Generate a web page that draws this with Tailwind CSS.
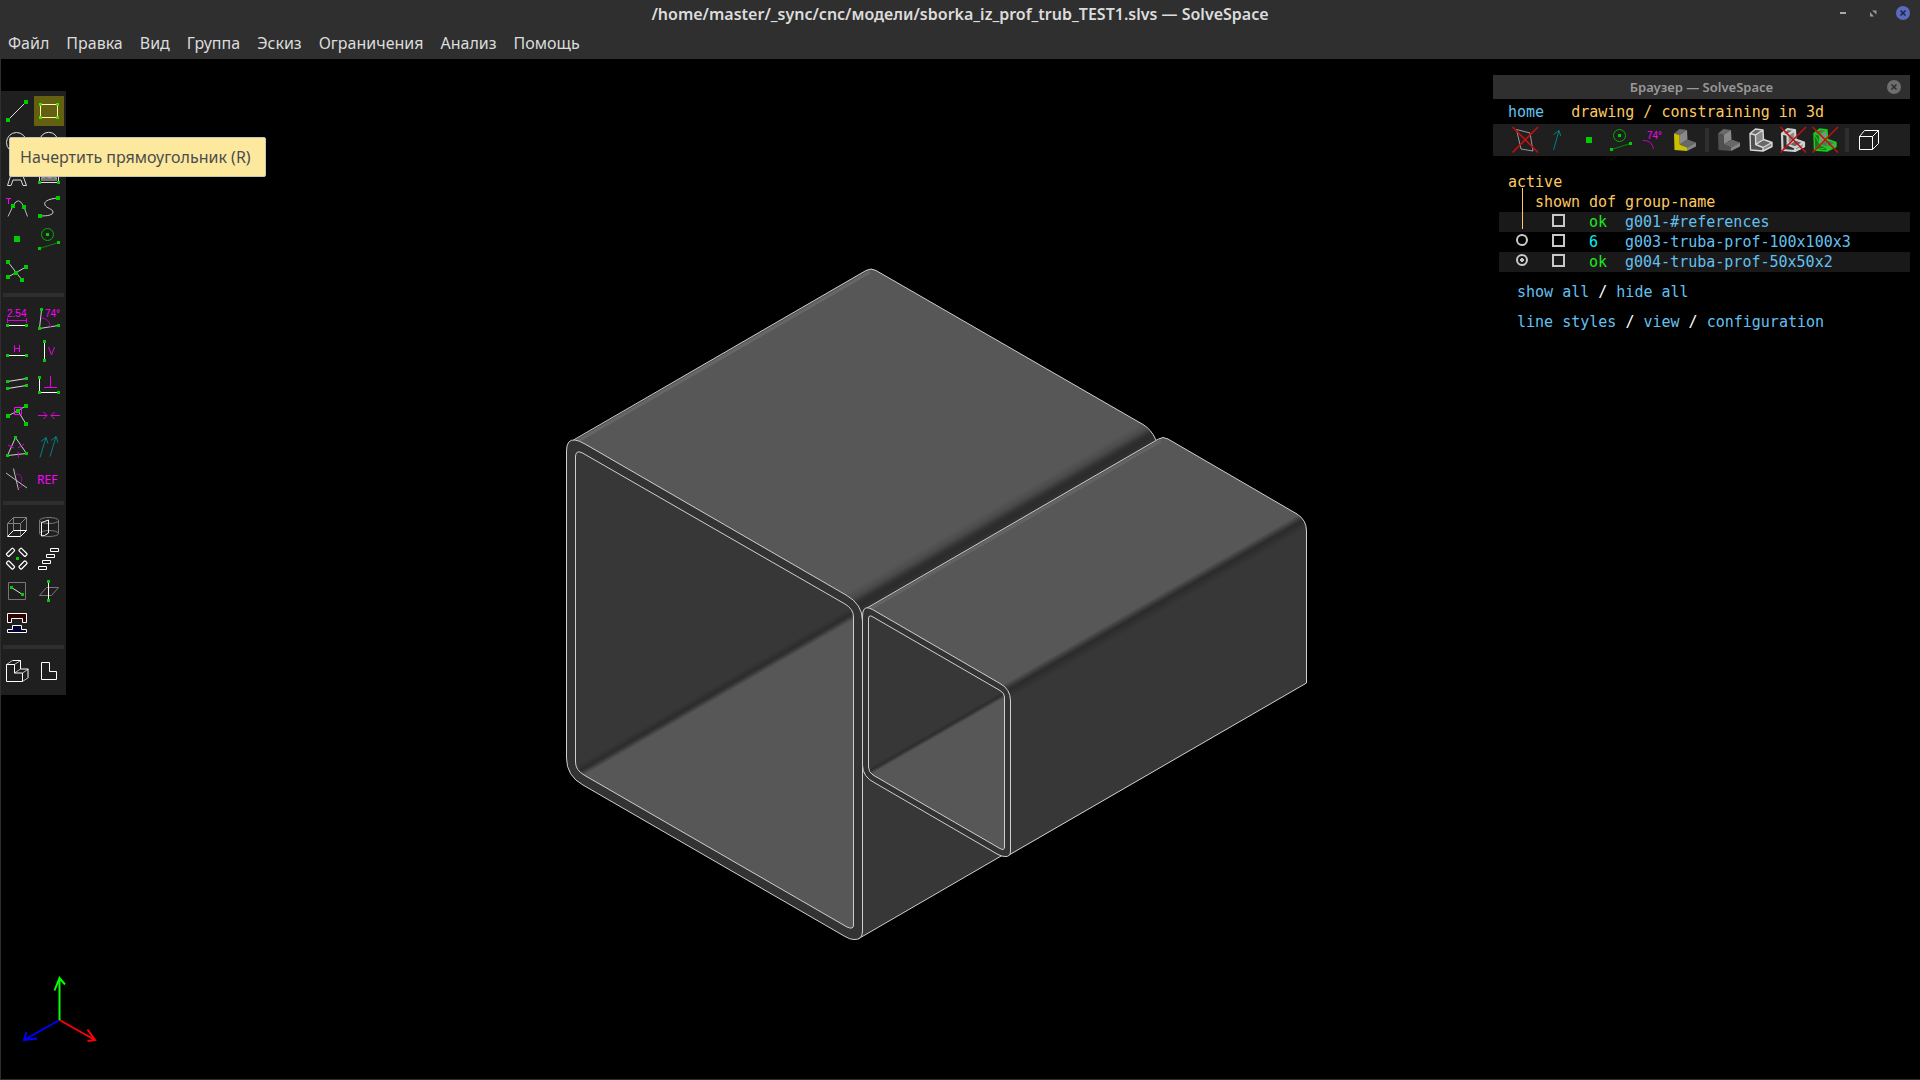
<!DOCTYPE html>
<html lang="ru">
<head>
<meta charset="utf-8">
<meta name="viewport" content="width=device-width, initial-scale=1">
<title>SolveSpace</title>
<script src="https://cdn.jsdelivr.net/npm/@tailwindcss/browser@4"></script>
</head>
<body class="bg-[#2f2f2f] font-['Noto_Sans',sans-serif] text-[#dcdcdc]">

<!-- Shared shapes -->
<svg class="absolute size-0" aria-hidden="true">
  <defs>
    <symbol id="pt" viewBox="0 0 32 32">
      <circle cx="14.5" cy="11.5" r="6" fill="none" stroke="#00b000"/>
      <path d="M6.5 25.5L25.5 19.5" stroke="#008c00"/>
      <path d="M13 10h3v3h-3zM5 24h3v3h-3zM24 18h3v3h-3z" fill="#00cc00"/>
    </symbol>
    <symbol id="arrow" viewBox="0 0 32 32">
      <path d="M12.5 26L18 6.5M12.5 10.5L18 6.5L19.7 12" fill="none" stroke="#008080"/>
    </symbol>
    <symbol id="lsolid" viewBox="0 0 32 32">
      <path d="M5 9.5L10.5 5L18 6L10.5 11z" fill="#6a6a6a"/>
      <path d="M10.5 11L18 6L18.5 15.5L10.7 20.5z" fill="#8a8a8a"/>
      <path d="M10.7 20.5L18.5 15.5L27 18.5L18 23.5z" fill="#686868"/>
      <path d="M18 23.5L27 18.5V22.5L18 27z" fill="#858585"/>
    </symbol>
    <symbol id="lfront" viewBox="0 0 32 32">
      <path d="M5 9.5L10.5 11L10.7 20.5L18 23.5V27L5.5 26z"/>
    </symbol>
    <symbol id="ledges" viewBox="0 0 32 32">
      <path d="M5 9.5L10.5 5L18 6L10.5 11zM10.5 11L10.7 20.5L18 23.5V27L5.5 26L5 9.5M18 6L18.5 15.5L10.7 20.5M18.5 15.5L27 18.5L18 23.5M27 18.5V22.5L18 27" fill="none" stroke-linejoin="round"/>
    </symbol>
    <symbol id="off" viewBox="0 0 32 32">
      <path d="M3.5 3L29 28.5M29 3L3.5 28.5" stroke="#c01010" stroke-width="1.6"/>
    </symbol>
  </defs>
</svg>

<div class="flex min-h-screen flex-col">
  <header>
    <div class="relative flex h-7 items-center justify-center">
      <h1 class="text-base font-semibold">/home/master/_sync/cnc/модели/sborka_iz_prof_trub_TEST1.slvs — SolveSpace</h1>
      <div class="absolute right-[9px] top-[5px] flex gap-[14px]">
        <button aria-label="Свернуть"><svg class="block size-4" viewBox="0 0 16 16"><path d="M5 7h6v2H5z" fill="#a8a8a8"/></svg></button>
        <button aria-label="Восстановить"><svg class="block size-4" viewBox="0 0 16 16"><path d="M7 5.5h4.5v4zM5 7v4.5h4z" fill="#999"/></svg></button>
        <button aria-label="Закрыть"><svg class="block size-4" viewBox="0 0 16 16"><circle cx="8" cy="8" r="7" fill="#5a6bbd"/><path d="M5.5 5.5l5 5M10.5 5.5l-5 5" stroke="#20263f" stroke-width="1.6"/></svg></button>
      </div>
    </div>
    <nav class="flex h-[31px] items-center gap-[17px] pb-px pl-2 text-base leading-5">
      <button>Файл</button><button>Правка</button><button>Вид</button><button>Группа</button><button>Эскиз</button><button>Ограничения</button><button>Анализ</button><button>Помощь</button>
    </nav>
  </header>

  <main class="relative mb-px ml-px flex-1 bg-black">
    <!-- Model view: two square tubes in isometric projection -->
    <svg class="absolute inset-0 size-full" viewBox="1 59 1919 1020" preserveAspectRatio="xMidYMid meet" role="img" aria-label="Две профильные трубы">
      <defs>
        <linearGradient id="gTopA" gradientUnits="userSpaceOnUse" x1="845" y1="594" x2="857" y2="614.8">
          <stop offset="0" stop-color="#575757"/><stop offset=".3" stop-color="#4a4a4a"/><stop offset=".55" stop-color="#303030"/><stop offset=".7" stop-color="#2b2b2b"/><stop offset="1" stop-color="#343434"/>
        </linearGradient>
        <linearGradient id="gTopB" gradientUnits="userSpaceOnUse" x1="1004" y1="684" x2="1012" y2="697.9">
          <stop offset="0" stop-color="#575757"/><stop offset=".3" stop-color="#383838"/><stop offset=".45" stop-color="#2b2b2b"/><stop offset="1" stop-color="#373737"/>
        </linearGradient>
        <linearGradient id="gInA" gradientUnits="userSpaceOnUse" x1="713" y1="687" x2="719" y2="697.4">
          <stop offset="0" stop-color="#373737"/><stop offset=".5" stop-color="#2c2c2c"/><stop offset=".65" stop-color="#353535"/><stop offset="1" stop-color="#575757"/>
        </linearGradient>
        <linearGradient id="gInB" gradientUnits="userSpaceOnUse" x1="936" y1="729" x2="939.5" y2="735.1">
          <stop offset="0" stop-color="#373737"/><stop offset=".5" stop-color="#2d2d2d"/><stop offset="1" stop-color="#575757"/>
        </linearGradient>
      </defs>
      <path d="M573.5 440.5L866 270.5Q871 267.5 876 270.5L1143 424.5Q1151 429 1156 440L863 615L848 596Z" fill="url(#gTopA)"/>
      <path d="M577 441.5L870 272" stroke="#666" stroke-width="3"/>
      <path d="M862.5 760L1002 855.5L858 939L862.5 932Z" fill="#373737"/>
      <path d="M868 608L1158.5 439Q1163 436 1168 439L1297 514Q1306.5 520 1306.5 531V683L1010 855Z" fill="url(#gTopB)"/>
      <path d="M871 608.5L1161 441" stroke="#636363" stroke-width="3"/>
      <g fill="none" stroke="#cfcfcf">
        <path d="M573.5 440L866 270.5Q871 267.5 876 270.5L1143 424.5Q1151 429 1156 440"/>
        <path d="M867 608L1158.5 439Q1163 436 1168 439L1297 514Q1306.5 520 1306.5 531V683L1009 855"/>
        <path d="M858 939L1002 855.5"/>
      </g>
      <g stroke="#cfcfcf">
        <path d="M566.5 451Q566.5 439 575 440Q579 440.5 585 444L846 595Q862.5 604 862.5 621V931Q862.5 940 854 939.5Q850 939.5 845 936.5L583 785Q566.5 776 566.5 758Z" fill="#333"/>
        <path d="M575.5 457Q575.5 451 580 452Q583 453 586 455L845 604Q853.5 609 853.5 617V925Q853.5 930 847 927L584 775Q575.5 770 575.5 762Z" fill="url(#gInA)"/>
        <path d="M862.5 617Q862.5 606 869 608Q872 609 876 611.5L1000 683.5Q1010.5 689 1010.5 701V851Q1010.5 857 1005 856.5Q1002 856.5 998 854.5L875 783Q862.5 777 862.5 765Z" fill="#333"/>
        <path d="M868.5 619Q868.5 614 873 617L1000 690.5Q1004.5 693 1004.5 697V847Q1004.5 851 1000 848.5L873 775Q868.5 772 868.5 767Z" fill="url(#gInB)"/>
      </g>
    </svg>

    <!-- Axes -->
    <svg class="absolute bottom-8 left-[19px] size-20" viewBox="20 967 80 80" fill="none" stroke-width="2">
      <path d="M59.5 1020L24 1040M26.5 1032L24 1040L37 1038.5" stroke="#0000ff"/>
      <path d="M59.5 1020L95 1040M87.5 1029.5L95 1040L87.5 1041" stroke="#ff0000"/>
      <path d="M59.5 1020V978M54.5 990.5L59.5 978L65 984.5" stroke="#00ff00"/>
    </svg>

    <!-- Drawing toolbar -->
    <aside class="absolute left-0 top-8 w-[65px] bg-[#1f1f1f] pb-2 pt-1">
      <div class="grid w-16 grid-cols-2">
        <button aria-label="Отрезок"><svg class="block size-8" viewBox="0 0 32 32"><path d="M7 25L25 7" stroke="#ddd"/><path d="M5 23h4v4H5zM23 5h4v4h-4z" fill="#0c0"/></svg></button>
        <button aria-label="Начертить прямоугольник" aria-describedby="tip"><svg class="block size-8" viewBox="0 0 32 32"><path d="M1 1h30v30H1z" fill="#636012"/><path d="M7.5 9.5h17v13h-17z" fill="none" stroke="#fffbb4"/><path d="M6 8h3v3H6zM23 8h3v3h-3zM6 21h3v3H6zM23 21h3v3h-3z" fill="#4cdc00"/></svg></button>
        <button aria-label="Окружность"><svg class="block size-8" viewBox="0 0 32 32"><circle cx="15.5" cy="15.5" r="10" fill="none" stroke="#ddd"/></svg></button>
        <button aria-label="Дуга"><svg class="block size-8" viewBox="0 0 32 32"><path d="M6.5 14.5a9.2 9.2 0 0 1 18.4 0" fill="none" stroke="#ddd"/></svg></button>
        <button aria-label="Текст"><svg class="block size-8" viewBox="0 0 32 32"><path d="M6.5 26.5L13 6h5l7.5 20.5h-3.5l-2-5.5h-8l-2 5.5zM12.5 17.5h6" fill="none" stroke="#ddd"/></svg></button>
        <button aria-label="Изображение"><svg class="block size-8" viewBox="0 0 32 32"><path d="M6.5 7.5h19v16h-19z" fill="#1f1f1f" stroke="#ddd"/><path d="M8 9h16v13H8z" fill="#777"/><path d="M8 20l5-3 4 2 3-2 4 3" stroke="#aaa" fill="none"/><path d="M5 22h3v3H5zM24 22h3v3h-3z" fill="#0c0"/></svg></button>
        <button aria-label="Касательная дуга"><svg class="block size-8" viewBox="0 0 32 32"><path d="M7 25.5L12 15Q17.5 4 23 16L26.5 25.5" fill="none" stroke="#bbb"/><path d="M5 7.5h5M7.5 7.5V13" stroke="#f0f"/><path d="M10 13h4v4h-4zM21 14h4v4h-4z" fill="#0c0"/></svg></button>
        <button aria-label="Сплайн"><svg class="block size-8" viewBox="0 0 32 32"><path d="M25 7C14 8 10.5 11 12 14C13 17 20 18 20 21C20 24 15 25 7 25" fill="none" stroke="#ccc"/><path d="M23 5h4v4h-4zM5 23h4v4H5z" fill="#0c0"/></svg></button>
        <button aria-label="Точка"><svg class="block size-8" viewBox="0 0 32 32"><path d="M13 13h6v6h-6z" fill="#0c0"/></svg></button>
        <button aria-label="Вспомогательная геометрия"><svg class="block size-8"><use href="#pt"/></svg></button>
        <button aria-label="Разделить кривые"><svg class="block size-8" viewBox="0 0 32 32"><path d="M7 7L21 25M7 22L25 12" stroke="#ccc"/><path d="M5 5h4v4H5zM23 10h4v4h-4zM5 20h4v4H5zM13 16h4v4h-4zM19 23h4v4h-4z" fill="#0c0"/></svg></button>
      </div>
      <div class="mx-[2px] my-[6px] h-1 bg-[#2e2e2e]"></div>
      <div class="grid w-16 grid-cols-2">
        <button aria-label="Расстояние"><svg class="block size-8" viewBox="0 0 32 32"><text x="6" y="14" class="font-['Liberation_Sans',sans-serif] text-[10px] font-normal" fill="#f0f">2.54</text><path d="M6.5 15v5M25.5 15v5M7 17.5h18" stroke="#d000d0"/><path d="M7 22.5h18" stroke="#fff"/><path d="M5 21h3v3H5zM24 21h3v3h-3z" fill="#0c0"/></svg></button>
        <button aria-label="Угол"><svg class="block size-8" viewBox="0 0 32 32"><path d="M8.5 7L6.5 25.5L25.5 22.5" fill="none" stroke="#ccc"/><path d="M8 15Q16 15 17.5 24" fill="none" stroke="#b000b0"/><text x="12" y="14" class="font-['Liberation_Sans',sans-serif] text-[10px]" fill="#f0f">74°</text><path d="M7 5h3v3H7zM5 24h3v3H5zM24 21h3v3h-3z" fill="#0c0"/></svg></button>
        <button aria-label="Горизонтально"><svg class="block size-8" viewBox="0 0 32 32"><path d="M13.5 10v7M18.5 10v7M13 13.5h6" stroke="#e800e8"/><path d="M7 20.5h18" stroke="#fff"/><path d="M5 19h3v3H5zM24 19h3v3h-3z" fill="#0c0"/></svg></button>
        <button aria-label="Вертикально"><svg class="block size-8" viewBox="0 0 32 32"><path d="M11.5 7v18" stroke="#fff"/><path d="M15.5 12l3 8 3-8" fill="none" stroke="#e800e8"/><path d="M10 5h3v3h-3zM10 24h3v3h-3z" fill="#0c0"/></svg></button>
        <button aria-label="Параллельно"><svg class="block size-8" viewBox="0 0 32 32"><path d="M6.5 14.5l19-3M6.5 21.5l19-3" stroke="#ddd"/><path d="M5 13h3v3H5zM24 10h3v3h-3zM5 20h3v3H5zM24 17h3v3h-3z" fill="#0c0"/></svg></button>
        <button aria-label="Перпендикулярно"><svg class="block size-8" viewBox="0 0 32 32"><path d="M6.5 11v14.500h19" fill="none" stroke="#fff"/><path d="M17.5 9v11M11 20.5h13" stroke="#e800e8"/><path d="M5 9h3v3H5zM5 24h3v3H5zM24 24h3v3h-3z" fill="#0c0"/></svg></button>
        <button aria-label="Точка на линии"><svg class="block size-8" viewBox="0 0 32 32"><path d="M7 17L25 7M17 12L25 25" stroke="#ccc"/><path d="M5 15h4v4H5zM23 5h4v4h-4zM15 10h4v4h-4zM23 23h4v4h-4z" fill="#0c0"/><path d="M13.5 8.5h7v7h-7z" fill="none" stroke="#f0f"/></svg></button>
        <button aria-label="Симметрично"><svg class="block size-8" viewBox="0 0 32 32"><path d="M5 16.5h9M10.5 13l3.5 3.5-3.5 3.5M27 16.5h-9M21.5 13L18 16.5l3.5 3.5" fill="none" stroke="#e800e8"/></svg></button>
        <button aria-label="Равенство"><svg class="block size-8" viewBox="0 0 32 32"><path d="M14.5 6.5L6.5 24.5L25.5 22.5z" fill="none" stroke="#ccc"/><path d="M7 14l6 3M17 17l6-4M17 20.5l.5 6" stroke="#d000d0"/><path d="M13 5h3v3h-3zM5 23h3v3H5zM24 21h3v3h-3z" fill="#0c0"/></svg></button>
        <button aria-label="Одинаковая ориентация"><svg class="block size-8" viewBox="0 0 32 32"><path d="M7 26.5L13 6.5M8 10.5l5-4 2 6M17 25.5L23 5.5M18 9.5l5-4 2 6" fill="none" stroke="#008080"/></svg></button>
        <button aria-label="Другой угол"><svg class="block size-8" viewBox="0 0 32 32"><path d="M5 10l21 15M12.5 5.5l5 21.500" stroke="#bbb"/><path d="M14 11.5Q20 10 21 16Q21 19 19 20M21 22q-1 3-4 3" fill="none" stroke="#a000a0"/></svg></button>
        <button aria-label="Справочный размер"><svg class="block size-8" viewBox="0 0 32 32"><text x="4" y="21" class="font-['Noto_Sans',sans-serif] text-[12px] font-normal" fill="#f0f">REF</text></svg></button>
      </div>
      <div class="mx-[2px] my-[6px] h-1 bg-[#2e2e2e]"></div>
      <div class="grid w-16 grid-cols-2">
        <button aria-label="Выдавливание"><svg class="block size-8" viewBox="0 0 32 32" fill="none"><path d="M6.5 25V12.500h13V25M6.5 12.500l6-6h13v13M19.5 12.500l6-6M12.5 6.5v13" stroke="#808080"/><path d="M6.5 25.5h13l6-6h-13z" stroke="#fff"/></svg></button>
        <button aria-label="Вращение"><svg class="block size-8" viewBox="0 0 32 32" fill="none" stroke="#777"><ellipse cx="16" cy="9.5" rx="9.5" ry="3"/><ellipse cx="16" cy="22.5" rx="9.5" ry="3"/><path d="M6.5 9.5v13M25.5 9.5v13"/><path d="M8.5 11.5l3-1 4-1.500v13l-4 2.500-3 .5z" stroke="#fff"/></svg></button>
        <button aria-label="Поворот и повтор"><svg class="block size-8" viewBox="0 0 32 32" fill="none" stroke="#fff" stroke-width="1.2"><rect x="5" y="7.5" width="9" height="3.6" rx="1" transform="rotate(-45 9.5 9.3)"/><rect x="17.5" y="7.5" width="9" height="3.6" rx="1" transform="rotate(45 22 9.3)"/><rect x="5" y="20.2" width="9" height="3.6" rx="1" transform="rotate(45 9.5 22)"/><rect x="17.5" y="20.2" width="9" height="3.6" rx="1" transform="rotate(-45 22 22)"/><path d="M15 14h3v3h-3z" fill="#0c0" stroke="none"/></svg></button>
        <button aria-label="Сдвиг и повтор"><svg class="block size-8" viewBox="0 0 32 32" fill="none" stroke="#fff"><path d="M17.5 5.5h8v3h-8zM13.5 11.5h8v3h-8zM9.5 17.5h8v3h-8zM5.5 23.5h8v3h-8z"/></svg></button>
        <button aria-label="Эскиз в плоскости"><svg class="block size-8" viewBox="0 0 32 32"><path d="M7.5 7.5h17v17h-17z" fill="none" stroke="#777"/><path d="M10.5 12.5l11 7" stroke="#ddd"/><path d="M9 11h3v3H9zM20 18h3v3h-3z" fill="#0c0"/></svg></button>
        <button aria-label="Эскиз в 3d"><svg class="block size-8" viewBox="0 0 32 32"><path d="M13.5 12.5h12l-7 8h-12z" fill="none" stroke="#777"/><path d="M15.5 7v18" stroke="#fff"/><path d="M14 5h3v3h-3zM14 24h3v3h-3z" fill="#0c0"/></svg></button>
        <button aria-label="Импорт"><svg class="block size-8" viewBox="0 0 32 32" stroke="#fff"><path d="M6.5 6.5h19v9h-4v-4h-11v4h-4z" fill="#300"/><path d="M11.5 18.5h9v4h5v3h-19v-3h5z" fill="#003"/></svg></button>
      </div>
      <div class="mx-[2px] my-[6px] h-1 bg-[#2e2e2e]"></div>
      <div class="grid w-16 grid-cols-2">
        <button aria-label="Изометрия"><svg class="block size-8" viewBox="0 0 32 32" fill="none"><path d="M5.5 9.5l6-4M13.5 9.5l6-4M13.5 18l6-4M21.5 18l6-4M21.5 26.5l6-4" stroke="#bbb"/><path d="M11.5 5.5h8V14h7.500v8.500M5.5 9.5h8V18h8v8.500h-16z" stroke="#fff"/></svg></button>
        <button aria-label="Вид по плоскости"><svg class="block size-8" viewBox="0 0 32 32" fill="none" stroke="#fff"><path d="M8.5 7.5h8v9h7v8h-15z"/></svg></button>
      </div>
    </aside>

    <!-- Tooltip of the highlighted tool -->
    <div id="tip" role="tooltip" class="absolute left-2 top-[78px] flex h-10 items-center whitespace-nowrap rounded-[2px] border border-[#c8c4b4] bg-[#fce99e] pl-[10px] pr-[14px] text-base text-[#4c4c4c]">Начертить прямоугольник (R)</div>

    <!-- Browser window -->
    <section class="absolute right-[10px] top-4 w-[417px] font-['DejaVu_Sans_Mono',monospace] text-[15px] leading-5 text-[#64c0f0]">
      <div class="relative flex h-6 items-center justify-center bg-[#2f2f2f] font-['Noto_Sans',sans-serif] text-[#999]">
        <h2 class="text-[13px] font-semibold">Браузер — SolveSpace</h2>
        <button aria-label="Закрыть" class="absolute right-2 top-1"><svg class="block size-4" viewBox="0 0 16 16"><circle cx="8" cy="8" r="7" fill="#6e6e6e"/><path d="M5.5 5.5l5 5M10.5 5.5l-5 5" stroke="#2f2f2f" stroke-width="1.6"/></svg></button>
      </div>
      <div class="flex h-[25px] items-center gap-[27px] pl-[15px]">
        <a href="#">home</a><span class="text-[#ffc860]">drawing / constraining in 3d</span>
      </div>
      <div class="flex h-8 items-center bg-[#1f1f1f] pl-4">
        <button aria-label="Рабочие плоскости"><svg class="block size-8" viewBox="0 0 32 32"><path d="M7.5 5.5L21 9l3 18-12-2z" fill="none" stroke="#999"/><use href="#off"/></svg></button>
        <button aria-label="Нормали"><svg class="block size-8"><use href="#arrow"/></svg></button>
        <button aria-label="Точки"><svg class="block size-8" viewBox="0 0 32 32"><path d="M13 13h6v6h-6z" fill="#0c0"/></svg></button>
        <button aria-label="Вспомогательная геометрия"><svg class="block size-8"><use href="#pt"/></svg></button>
        <button aria-label="Ограничения"><svg class="block size-8" viewBox="0 0 32 32"><text x="10" y="15" class="font-['Liberation_Sans',sans-serif] text-[10px]" fill="#f0f">74°</text><path d="M6 16.5Q15 16 16.5 25" fill="none" stroke="#c000c0"/></svg></button>
        <button aria-label="Грани"><svg class="block size-8" viewBox="0 0 32 32"><use href="#lsolid"/><use href="#lfront" fill="#c8c000"/></svg></button>
        <div class="mx-1 h-6 w-1 bg-[#2e2e2e]"></div>
        <button aria-label="Закраска"><svg class="block size-8" viewBox="0 0 32 32"><use href="#lsolid"/><use href="#lfront" fill="#505050"/></svg></button>
        <button aria-label="Рёбра"><svg class="block size-8" viewBox="0 0 32 32"><use href="#lsolid"/><use href="#lfront" fill="#505050"/><use href="#ledges" stroke="#d8d8d8" stroke-width="1.4"/></svg></button>
        <button aria-label="Контуры"><svg class="block size-8" viewBox="0 0 32 32"><use href="#lsolid"/><use href="#lfront" fill="#303030"/><use href="#ledges" stroke="#d0d0d0" stroke-width="2.2"/><use href="#off"/></svg></button>
        <button aria-label="Сетка"><svg class="block size-8" viewBox="0 0 32 32"><use href="#lsolid"/><use href="#lfront" fill="#2c6a2c"/><use href="#ledges" stroke="#10d810" stroke-width="1.4"/><path d="M5 9.5L11 20.5L5.5 26M10.5 11L18.5 15.5M10.7 20.5L5.5 26L18 23.5M18.5 15.5L18 23.5L27 22.5" fill="none" stroke="#10d810"/><use href="#off"/></svg></button>
        <div class="mx-1 h-6 w-1 bg-[#2e2e2e]"></div>
        <button aria-label="Невидимые линии"><svg class="block size-8" viewBox="0 0 32 32" fill="none" stroke="#fff"><path d="M6.5 12.5h13v13h-13zM6.5 12.5l5-6h14v13l-6 6M19.5 12.5l6-6"/></svg></button>
      </div>
      <div class="relative pl-[6px] pt-4">
        <table class="w-full table-fixed border-collapse text-left">
          <colgroup><col class="w-9"><col class="w-[54px]"><col class="w-9"><col></colgroup>
          <thead class="text-[#ffc860]">
            <tr class="h-5"><th colspan="4" class="p-0 pl-[9px] font-normal">active</th></tr>
            <tr class="h-5"><th class="p-0"></th><th class="p-0 font-normal">shown</th><th class="p-0 font-normal">dof</th><th class="p-0 font-normal">group-name</th></tr>
          </thead>
          <tbody>
            <tr class="h-5 bg-[#191919]">
              <td class="p-0"></td>
              <td class="p-0 pl-[17px]"><input type="checkbox" aria-label="show g001" class="mb-1 block size-[13px] appearance-none border-2 border-[#c8c8c8]"></td>
              <td class="p-0 text-[#20e820]">ok</td><td class="p-0"><a href="#">g001-#references</a></td>
            </tr>
            <tr class="h-5">
              <td class="p-0 pl-[17px]"><input type="radio" name="active" aria-label="activate g003" class="mb-1 block size-3 appearance-none rounded-full border-2 border-[#c8c8c8]"></td>
              <td class="p-0 pl-[17px]"><input type="checkbox" aria-label="show g003" class="mb-1 block size-[13px] appearance-none border-2 border-[#c8c8c8]"></td>
              <td class="p-0 text-[#00f0f0]">6</td><td class="p-0"><a href="#">g003-truba-prof-100x100x3</a></td>
            </tr>
            <tr class="h-5 bg-[#191919]">
              <td class="p-0 pl-[17px]"><input type="radio" name="active" checked aria-label="activate g004" class="mb-1 block size-3 appearance-none rounded-full border-2 border-[#c8c8c8] bg-[radial-gradient(circle,#c8c8c8_2px,transparent_2px)]"></td>
              <td class="p-0 pl-[17px]"><input type="checkbox" aria-label="show g004" class="mb-1 block size-[13px] appearance-none border-2 border-[#c8c8c8]"></td>
              <td class="p-0 text-[#20e820]">ok</td><td class="p-0"><a href="#">g004-truba-prof-50x50x2</a></td>
            </tr>
          </tbody>
        </table>
        <div class="absolute left-[29px] top-8 h-[41px] w-px bg-[#ffc860]"></div>
      </div>
      <p class="mt-[10px] pl-6"><a href="#">show all</a> <span class="text-white">/</span> <a href="#">hide all</a></p>
      <p class="mt-[10px] pl-6"><a href="#">line styles</a> <span class="text-white">/</span> <a href="#">view</a> <span class="text-white">/</span> <a href="#">configuration</a></p>
    </section>
  </main>
</div>
</body>
</html>
